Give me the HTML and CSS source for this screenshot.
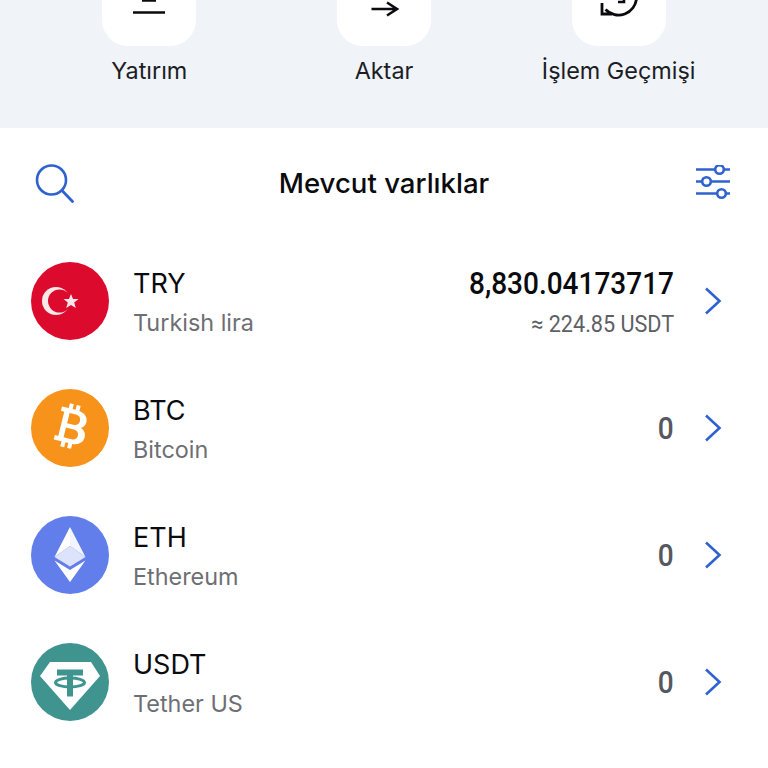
FILE: index.html
```html
<!DOCTYPE html>
<html lang="tr">
<head>
    <meta charset="UTF-8">
    <meta name="viewport" content="width=device-width, initial-scale=1.0">
    <title>Mevcut varlıklar</title>
    <link rel="stylesheet" href="styles.css">
</head>
<body>
    <div class="actions">
        <div class="action">
            <div class="tile">
                <svg class="tile-icon" width="40" height="30" viewBox="0 0 40 30">
                    <path d="M4 22.500h32M13 10.500h14" fill="none" stroke="#0b0b0f" stroke-width="2.600"/>
                </svg>
            </div>
            <span class="action-label">Yatırım</span>
        </div>
        <div class="action">
            <div class="tile">
                <svg class="tile-icon" width="40" height="30" viewBox="0 0 40 30">
                    <path d="M7.500 19h25M23 12.500l10 6.500-10 6.500" fill="none" stroke="#0b0b0f" stroke-width="2.600"/>
                </svg>
            </div>
            <span class="action-label">Aktar</span>
        </div>
        <div class="action">
            <div class="tile">
                <svg class="tile-icon" width="40" height="30" viewBox="0 0 40 30">
                    <path d="M37.500 8a18 18 0 0 1-31 11.500M3 13v11h10" fill="none" stroke="#0b0b0f" stroke-width="2.800"/>
                    <path d="M25 5v7h-6" fill="none" stroke="#0b0b0f" stroke-width="2.600"/>
                </svg>
            </div>
            <span class="action-label">İşlem Geçmişi</span>
        </div>
    </div>

    <div class="assets">
        <div class="assets-header">
            <svg width="40" height="40" viewBox="0 0 40 40">
                <circle cx="16.500" cy="17" r="14.500" fill="none" stroke="#2f62d0" stroke-width="2.600"/>
                <path d="M27 27.500l10.500 11" fill="none" stroke="#2f62d0" stroke-width="2.800" stroke-linecap="round"/>
            </svg>
            <h2>Mevcut varlıklar</h2>
            <svg width="36" height="36" viewBox="0 0 36 36">
                <g fill="none" stroke="#2f62d0" stroke-width="2.600">
                    <path d="M1 4.500h19M29 4.500h6M1 16.500h6M16 16.500h19M1 28.500h21M31 28.500h4"/>
                    <circle cx="24.500" cy="4.500" r="4.300"/>
                    <circle cx="11.500" cy="16.500" r="4.300"/>
                    <circle cx="26.500" cy="28.500" r="4.300"/>
                </g>
            </svg>
        </div>

        <div class="asset-row">
            <svg class="coin" viewBox="0 0 78 78">
                <circle cx="39" cy="39" r="39" fill="#dc0a2d"/>
                <circle cx="25" cy="39" r="14" fill="#f8e8ea"/>
                <circle cx="28.500" cy="39" r="11.500" fill="#dc0a2d"/>
                <polygon points="40,32 42,37 47.500,37 43.200,40.500 44.800,46 40,43 35.200,46 36.800,40.500 32.500,37 38,37" fill="#f8e8ea"/>
            </svg>
            <div class="asset-name">
                <span class="symbol">TRY</span>
                <span class="full-name">Turkish lira</span>
            </div>
            <div class="asset-value">
                <span class="amount">8,830.04173717</span>
                <span class="approx">≈ 224.85 USDT</span>
            </div>
            <svg class="chevron" width="18" height="28" viewBox="0 0 18 28"><path d="M2 1.500L15.500 14 2 26.500" /></svg>
        </div>

        <div class="asset-row">
            <svg class="coin" viewBox="0 0 78 78">
                <circle cx="39" cy="39" r="39" fill="#f7931a"/>
                <g transform="rotate(14 39 39)">
                    <path fill-rule="evenodd" fill="#fff" d="M26 20h7v-5h4v5h3v-5h4v5.300c6 1 9.500 4.300 9.500 9.200 0 3.200-1.500 5.700-4 7 3.700 1.200 6 4 6 8 0 5.500-4 9-10.500 9.400V59h-4v-5h-3v5h-4v-5h-8v-4.500h3.500V24.500H26zM35 24.500v10.500h6.500c3.300 0 5.500-2 5.500-5.200s-2.200-5.300-5.500-5.300zM35 39.500v10h8c3.300 0 5.500-2 5.500-5s-2.200-5-5.500-5z"/>
                </g>
            </svg>
            <div class="asset-name">
                <span class="symbol">BTC</span>
                <span class="full-name">Bitcoin</span>
            </div>
            <div class="asset-value">
                <span class="amount zero">0</span>
            </div>
            <svg class="chevron" width="18" height="28" viewBox="0 0 18 28"><path d="M2 1.500L15.500 14 2 26.500" /></svg>
        </div>

        <div class="asset-row">
            <svg class="coin" viewBox="0 0 78 78">
                <circle cx="39" cy="39" r="39" fill="#627eea"/>
                <polygon points="39,11 39,30 54.500,41" fill="#f2f4fe"/>
                <polygon points="39,11 39,30 23.500,41" fill="#fff"/>
                <polygon points="39,30 54.500,41 39,50.500 23.500,41" fill="#dde3fb"/>
                <polygon points="23.500,44.500 39,54 54.500,44.500 39,66" fill="#fff"/>
            </svg>
            <div class="asset-name">
                <span class="symbol">ETH</span>
                <span class="full-name">Ethereum</span>
            </div>
            <div class="asset-value">
                <span class="amount zero">0</span>
            </div>
            <svg class="chevron" width="18" height="28" viewBox="0 0 18 28"><path d="M2 1.500L15.500 14 2 26.500" /></svg>
        </div>

        <div class="asset-row">
            <svg class="coin" viewBox="0 0 78 78">
                <circle cx="39" cy="39" r="39" fill="#3f9490"/>
                <polygon points="19,19 60,19 69,33 39,67 9,33" fill="#fff"/>
                <g fill="none" stroke="#3f9490">
                    <path d="M26 29.500h26M39 29.500v24" stroke-width="6"/>
                    <ellipse cx="39" cy="39.500" rx="14.500" ry="4.500" stroke-width="3"/>
                </g>
            </svg>
            <div class="asset-name">
                <span class="symbol">USDT</span>
                <span class="full-name">Tether US</span>
            </div>
            <div class="asset-value">
                <span class="amount zero">0</span>
            </div>
            <svg class="chevron" width="18" height="28" viewBox="0 0 18 28"><path d="M2 1.500L15.500 14 2 26.500" /></svg>
        </div>
    </div>
</body>
</html>
```

FILE: styles.css
```css
body {
    font-family: Inter, "Noto Sans", sans-serif;
    background-color: white;
    margin: 0;
    height: 768px;
    overflow: hidden;
    color: #0b0b0f;
}

.actions {
    display: grid;
    grid-template-columns: repeat(3, 1fr);
    height: 128px;
    padding: 0 32px;
    box-sizing: border-box;
    background-color: #f0f3f8;
}

.action {
    display: flex;
    flex-direction: column;
    align-items: center;
}

.tile {
    width: 94px;
    height: 46px;
    display: flex;
    justify-content: center;
    align-items: flex-end;
    overflow: hidden;
    background: white;
    border-radius: 0 0 26px 26px;
}

.tile-icon {
    flex: none;
    margin-bottom: 26px;
}

.action-label {
    margin-top: 11px;
    font-size: 23.400px;
    line-height: 28px;
    white-space: nowrap;
    color: #1c1e25;
}

.assets-header {
    display: flex;
    justify-content: space-between;
    align-items: center;
    height: 109.500px;
    padding: 0 37px 0 35px;
}

.assets-header h2 {
    margin: 1px 2px 0 0;
    font-size: 27.600px;
    font-weight: 500;
    line-height: 108px;
}

.asset-row {
    display: flex;
    align-items: center;
    height: 127px;
    padding: 0 46px 0 31px;
}

.coin {
    width: 78px;
    height: 78px;
    flex: none;
}

.asset-name {
    display: flex;
    flex-direction: column;
    margin-left: 24px;
    padding-top: 2px;
}

.symbol {
    font-size: 27px;
    line-height: 34px;
}

.full-name {
    margin-top: 8px;
    font-size: 23.400px;
    line-height: 28px;
    color: #6e6f74;
}

.asset-value {
    display: flex;
    flex-direction: column;
    align-items: flex-end;
    margin-left: auto;
    padding-top: 2px;
    font-family: Roboto, sans-serif;
}

.amount {
    font-size: 31px;
    font-weight: 500;
    line-height: 38px;
    transform: scaleX(0.903);
    transform-origin: right center;
}

.zero {
    color: #55585f;
}

.approx {
    margin-top: 8px;
    font-size: 23px;
    line-height: 28px;
    color: #5e5f65;
    transform: scaleX(0.94);
    transform-origin: right center;
}

.chevron {
    flex: none;
    margin-left: 30px;
    fill: none;
    stroke: #2f62d0;
    stroke-width: 2.6;
}
```
